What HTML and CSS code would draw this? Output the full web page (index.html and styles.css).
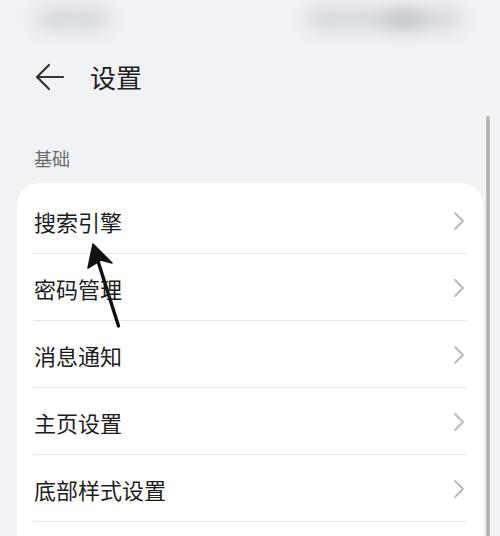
FILE: index.html
```html
<!DOCTYPE html>
<html lang="zh-CN">
<head>
<meta charset="utf-8">
<title>设置</title>
<link rel="stylesheet" href="styles.css">
</head>
<body>
<div class="screen">
  <div class="status">
    <span class="blob blob-left"></span>
    <span class="blob blob-right"><span class="blob-dark"></span></span>
  </div>
  <header class="header">
    <svg class="back" width="30" height="28" viewBox="0 0 30 28" aria-hidden="true">
      <path d="M28 14 H3 M14 2 L2 14 L14 26" fill="none" stroke="#333" stroke-width="2.2" stroke-linecap="round" stroke-linejoin="round"/>
    </svg>
    <h1 class="title">设置</h1>
  </header>
  <div class="section-label">基础</div>
  <div class="card">
    <div class="row"><span class="row-text">搜索引擎</span><svg class="chev" width="12" height="20" viewBox="0 0 12 20"><path d="M2 2 L10 10 L2 18" fill="none" stroke="#b8b8b8" stroke-width="1.8" stroke-linecap="round" stroke-linejoin="round"/></svg></div>
    <div class="row"><span class="row-text">密码管理</span><svg class="chev" width="12" height="20" viewBox="0 0 12 20"><path d="M2 2 L10 10 L2 18" fill="none" stroke="#b8b8b8" stroke-width="1.8" stroke-linecap="round" stroke-linejoin="round"/></svg></div>
    <div class="row"><span class="row-text">消息通知</span><svg class="chev" width="12" height="20" viewBox="0 0 12 20"><path d="M2 2 L10 10 L2 18" fill="none" stroke="#b8b8b8" stroke-width="1.8" stroke-linecap="round" stroke-linejoin="round"/></svg></div>
    <div class="row"><span class="row-text">主页设置</span><svg class="chev" width="12" height="20" viewBox="0 0 12 20"><path d="M2 2 L10 10 L2 18" fill="none" stroke="#b8b8b8" stroke-width="1.8" stroke-linecap="round" stroke-linejoin="round"/></svg></div>
    <div class="row"><span class="row-text">底部样式设置</span><svg class="chev" width="12" height="20" viewBox="0 0 12 20"><path d="M2 2 L10 10 L2 18" fill="none" stroke="#b8b8b8" stroke-width="1.8" stroke-linecap="round" stroke-linejoin="round"/></svg></div>
    <div class="row row-last"></div>
  </div>
  <div class="scrollbar"></div>
  <svg class="pointer" width="500" height="536" viewBox="0 0 500 536" aria-hidden="true">
    <path d="M118.5 326 L97 258" fill="none" stroke="#111" stroke-width="3.4" stroke-linecap="round"/>
    <path d="M93 244 L112 263 L101 260 L88 268 Z" fill="#111" stroke="#111" stroke-width="1.5" stroke-linejoin="round"/>
  </svg>
</div>
</body>
</html>
```

FILE: styles.css
```css
html, body {
  margin: 0;
  padding: 0;
}
body {
  background: #f0f2f5;
  font-family: "Noto Sans CJK SC", "Noto Sans", sans-serif;
  color: #1c1c1c;
}
.screen {
  position: relative;
  width: 500px;
  height: 536px;
  overflow: hidden;
  background: #f0f2f5;
}
.status {
  height: 40px;
  display: flex;
  justify-content: space-between;
  align-items: center;
  padding: 0 38px 0 36px;
  box-sizing: border-box;
}
.blob {
  display: block;
  height: 20px;
  border-radius: 10px;
  background: #d2d5d9;
  filter: blur(9px);
  margin-top: -2px;
}
.blob-left {
  width: 74px;
}
.blob-right {
  width: 156px;
  display: flex;
  justify-content: flex-end;
  padding-right: 38px;
  box-sizing: border-box;
}
.blob-dark {
  display: block;
  width: 40px;
  height: 20px;
  border-radius: 10px;
  background: #babdc1;
}
.header {
  height: 74px;
  display: flex;
  align-items: center;
  padding-left: 35px;
}
.back {
  display: block;
  margin-right: 25px;
}
.title {
  margin: 0;
  font-size: 26px;
  font-weight: 400;
  line-height: 30px;
  color: #1e1e1e;
}
.section-label {
  margin-top: 32px;
  height: 24px;
  line-height: 24px;
  padding-left: 34px;
  font-size: 18px;
  color: #6a6a6a;
}
.card {
  margin: 13px 17px 0;
  background: #fff;
  border-radius: 22px;
  padding: 4px 16px 0;
}
.row {
  height: 66px;
  border-bottom: 1px solid #e6e6e6;
  display: flex;
  align-items: center;
  justify-content: space-between;
  padding: 0 2px 0 1px;
}
.row-last {
  border-bottom: none;
  height: 60px;
}
.row-text {
  font-size: 22px;
  line-height: 30px;
  padding-top: 2px;
  color: #1c1c1c;
}
.chev {
  display: block;
  padding-top: 2px;
}
.scrollbar {
  position: absolute;
  left: 486px;
  top: 116px;
  width: 4px;
  height: 440px;
  border-radius: 2px;
  background: linear-gradient(to right, #c9c9c9, #a9a9a9 50%, #c9c9c9);
}
.pointer {
  position: absolute;
  left: 0;
  top: 0;
}
```
